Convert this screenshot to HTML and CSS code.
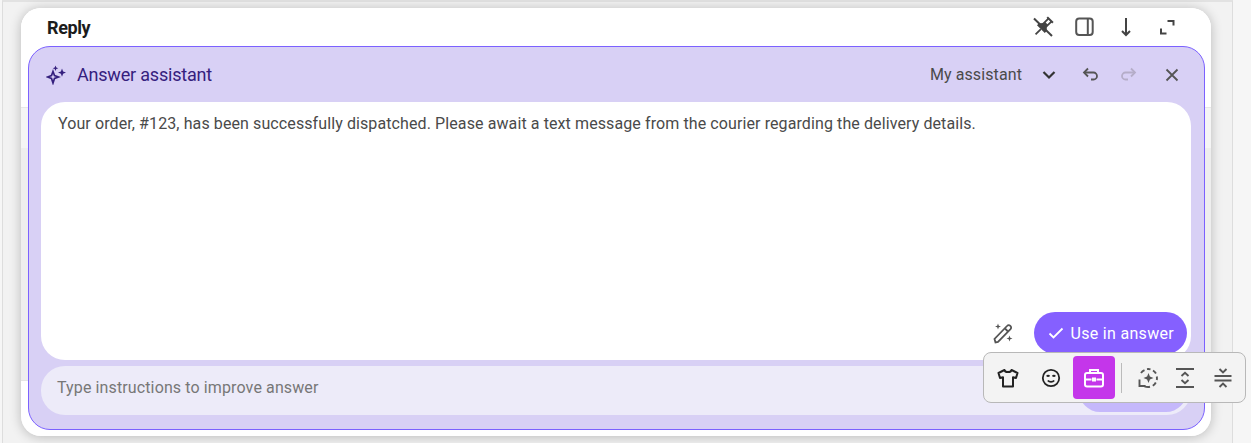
FILE: index.html
```html
<!DOCTYPE html>
<html lang="en">
<head>
<title>Answer assistant</title>
<meta charset="utf-8">
<link rel="stylesheet" href="styles.css">
</head>
<body>

<div class="page">
	<div class="card">
		<div class="card-head">
			<h2 class="card-title">Reply</h2>
			<div class="card-tools">
				<svg class="ico-24" viewBox="0 0 24 24"><g transform="rotate(45 12 12)" fill="#444"><path fill-rule="evenodd" d="M8 1h8v2h-1v6.500l2.500 3V15h-11v-2.500l2.500-3V3H8zM10.800 3v4h2.400V3z"/><path d="M11.100 15h1.800v7.500h-1.800z"/></g><path d="M3 3.500L21 21" stroke="#444" stroke-width="2"/></svg>
				<svg class="ico-24" viewBox="0 0 24 24" fill="none" stroke="#555" stroke-width="2"><rect x="4.200" y="3.500" width="16.500" height="16.500" rx="3"/><path d="M15.800 3.500v16.500"/></svg>
				<svg class="ico-24" viewBox="0 0 24 24" fill="none" stroke="#444" stroke-width="2"><path d="M12 3v16"/><path d="M8 16l4 4 4-4"/></svg>
				<svg class="ico-24" viewBox="0 0 24 24" fill="none" stroke="#444" stroke-width="2"><path d="M12.500 6h6v4.500"/><path d="M6 13.500v5h5.500"/></svg>
			</div>
		</div>

		<div class="assistant">
			<div class="assistant-head">
				<svg class="ico-20" viewBox="0 0 20 20" fill="#35207e"><path d="M7 6.500l1.500 4 4 1.500-4 1.500L7 18l-1.500-4.500-4-1.500 4-1.500z" fill="none" stroke="#35207e" stroke-width="1.700"/><path d="M16 3.500l1.100 3 2.900 1.100-2.900 1.100-1.100 3-1.100-3L12 7.600l2.900-1.100zM9.500.5l.8 2 2 .8-2 .8-.8 2-.8-2-2-.8 2-.8z"/></svg>
				<span class="assistant-title">Answer assistant</span>
				<span class="assistant-name">My assistant</span>
				<svg class="ico-chev" viewBox="0 0 14 14" fill="none" stroke="#333" stroke-width="2.200"><path d="M1.500 4l5.500 5.500L12.500 4"/></svg>
				<svg class="ico-18 undo" viewBox="0 0 18 18" fill="none" stroke="#555" stroke-width="1.800"><path d="M6 2.500L2 6.500l4 4"/><path d="M2.500 6.500h9a3.500 3.500 0 0 1 0 7H9"/></svg>
				<svg class="ico-18 redo" viewBox="0 0 18 18" fill="none" stroke="#b5adc8" stroke-width="1.800"><path d="M12 2.500l4 4-4 4"/><path d="M15.500 6.500h-9a3.500 3.500 0 0 0 0 7H9"/></svg>
				<svg class="ico-18 close" viewBox="0 0 18 18" fill="none" stroke="#555" stroke-width="1.800"><path d="M3.500 3.500l11 11M14.500 3.500l-11 11"/></svg>
			</div>

			<div class="answer">
				<p class="answer-text">Your order, #123, has been successfully dispatched. Please await a text message from the courier regarding the delivery details.</p>
				<div class="answer-actions">
					<svg class="ico-22" viewBox="0 0 22 22" fill="none" stroke="#555" stroke-width="1.800"><path d="M3.500 20.500L2.500 17 15 4a2.300 2.300 0 0 1 3.500 3.200L6 20z"/><path d="M13 6.500l3 3"/><path d="M6 1.500l.8 2.200 2.200.8-2.200.8L6 7.500l-.8-2.200L3 4.500l2.200-.8zM17.500 13.500l.8 2.200 2.200.8-2.200.8-.8 2.200-.8-2.200-2.200-.8 2.200-.8z" fill="#555" stroke="none"/></svg>
					<button class="use-btn"><svg class="ico-check" viewBox="0 0 16 16" fill="none" stroke="#fff" stroke-width="1.800"><path d="M1.500 8.500l4 4 9-9"/></svg>Use in answer</button>
				</div>
			</div>

			<div class="improve">
				<span class="improve-hint">Type instructions to improve answer</span>
				<span class="improve-btn"></span>
			</div>
		</div>

		<!-- tone popup sits over the bottom right of the panel -->
		<div class="tone-bar">
			<span class="tone"><svg class="ico-22" viewBox="0 0 22 22" fill="none" stroke="#222" stroke-width="2" stroke-linejoin="round"><path d="M7.500 3L1.500 6l1.500 5 3-.7V19.500h10v-9.200l3 .7 1.500-5-6-3c-.5 2.800-6.500 2.800-7 0z"/></svg></span>
			<span class="tone"><svg class="ico-22" viewBox="0 0 22 22" fill="none" stroke="#222" stroke-width="1.800"><circle cx="11" cy="11" r="8.200"/><path d="M6.800 9.500c.7-1 1.900-1 2.600 0M12.600 9.500c.7-1 1.900-1 2.600 0M7.800 13.500c1.500 1.800 4.900 1.800 6.400 0"/></svg></span>
			<span class="tone tone-on"><svg class="ico-22" viewBox="0 0 22 22" fill="none" stroke="#fff" stroke-width="2"><rect x="2" y="6" width="18" height="13.500" rx="2"/><path d="M7 6V3h8v3M2 12.500h6.500M13.500 12.500H20"/><rect x="9" y="10.500" width="4" height="4" fill="#fff" stroke="none"/></svg></span>
			<span class="tone-sep"></span>
			<span class="tone tone-sm"><svg class="ico-22" viewBox="0 0 22 22" fill="none" stroke="#555" stroke-width="1.900"><path d="M4 6a9 9 0 0 1 3.500-2.800M10 2.100a9 9 0 0 1 3.500.2M16 3.500a9 9 0 0 1 3 3M19.800 9.500a9 9 0 0 1 0 3.500M18.800 15.500a9 9 0 0 1-3 3.300M13 19.800a9 9 0 0 1-5.500-.5"/><path d="M2.500 12.500v6.500h6"/><path d="M11.500 6l1.400 3.600 3.600 1.400-3.600 1.400-1.400 3.600-1.400-3.600L6.500 11l3.600-1.400z" fill="#555" stroke="none"/></svg></span>
			<span class="tone tone-sm"><svg class="ico-22" viewBox="0 0 22 22" fill="none" stroke="#555" stroke-width="1.900"><path d="M2 2h18M2 20h18"/><path d="M7.500 9L11 5.800 14.500 9M7.500 13L11 16.200l3.500-3.200"/></svg></span>
			<span class="tone tone-sm"><svg class="ico-22" viewBox="0 0 22 22" fill="none" stroke="#555" stroke-width="1.900"><path d="M2.500 9h17M2.500 13.500h17"/><path d="M7.500 2L11 5.500 14.500 2M7.500 20L11 16.500l3.500 3.500"/></svg></span>
		</div>
	</div>
</div>

</body>
</html>
```

FILE: styles.css
```css
html, body {
	height: 100%;
	margin: 0;
	padding: 0;
}

body {
	background: #f6f6f6;
	font-family: Roboto, "Liberation Sans", sans-serif;
	overflow: hidden;
}

svg {
	display: block;
	flex: none;
}

.page {
	width: 1231px;
	height: 443px;
	margin-left: 2px;
	box-sizing: border-box;
	padding: 6px 21px 7px 18px;
	background: #f2f2f2;
	border-top: 2px solid #e2e2e2;
	border-left: 1px solid #ddd;
	border-right: 1px solid #ddd;
}

/* the strips left and right of the panel show the form lying under it */
.card {
	position: relative;
	height: 428px;
	box-sizing: border-box;
	padding: 0 6px 6px 7px;
	background: linear-gradient(#fff 99px, #e8e8e8 99px, #e8e8e8 100px, #f5f5f5 100px, #f5f5f5 140px, #eee 140px, #eee 372px, #e4e4e4 372px, #e4e4e4 373px, #fff 373px);
	border-radius: 20px;
	box-shadow: 0 1px 12px rgba(0, 0, 0, 0.24);
	display: flex;
	flex-direction: column;
}

.card-head {
	height: 38px;
	flex: none;
	display: flex;
	align-items: center;
	margin: 0 -6px 0 -7px;
	padding: 0 32px 0 26px;
	background: #fff;
	border-radius: 20px 20px 0 0;
}

.card-title {
	margin: 0;
	font-size: 18px;
	font-weight: 700;
	letter-spacing: -0.4px;
	color: #1c1c1c;
	flex: 1;
}

.card-tools {
	display: flex;
	gap: 17.5px;
}

.ico-24 {
	width: 24px;
	height: 24px;
}

.ico-22 {
	width: 22px;
	height: 22px;
}

.ico-20 {
	width: 20px;
	height: 20px;
}

.ico-18 {
	width: 18px;
	height: 18px;
}

.ico-chev {
	width: 14px;
	height: 14px;
	margin-left: 20px;
}

.ico-check {
	width: 16px;
	height: 16px;
	margin-right: 7px;
}

.assistant {
	flex: 1;
	display: flex;
	flex-direction: column;
	background: #d8d0f5;
	border: 1px solid #7b61ff;
	border-radius: 22px;
	padding: 0 13px 14px 12px;
}

.assistant-head {
	height: 55px;
	flex: none;
	display: flex;
	align-items: center;
	padding: 0 10px 0 5px;
}

.assistant-title {
	margin-left: 11px;
	font-size: 18px;
	letter-spacing: -0.2px;
	color: #35207e;
	flex: 1;
}

.assistant-name {
	font-size: 16px;
	letter-spacing: 0.1px;
	color: #4a4a4a;
}

.undo {
	margin-left: 26px;
}

.redo {
	margin-left: 19px;
}

.close {
	margin-left: 26px;
}

.answer {
	height: 258px;
	flex: none;
	box-sizing: border-box;
	background: #fff;
	border-radius: 24px;
	padding: 12px 4px 6px 17px;
	display: flex;
	flex-direction: column;
}

.answer-text {
	margin: 0;
	flex: 1;
	font-size: 16px;
	line-height: 20px;
	letter-spacing: 0.1px;
	color: #4a4a4a;
}

.answer-actions {
	display: flex;
	justify-content: flex-end;
	align-items: center;
	gap: 20px;
}

.use-btn {
	height: 42px;
	box-sizing: border-box;
	padding: 0 13px 0 14px;
	display: flex;
	align-items: center;
	background: #8560ff;
	border: 0;
	border-radius: 21px;
	font-family: inherit;
	font-size: 16px;
	letter-spacing: 0.3px;
	color: #fff;
	box-shadow: 0 0 0 2px rgba(255, 255, 255, 0.5);
}

.improve {
	height: 49px;
	flex: none;
	margin-top: 6px;
	box-sizing: border-box;
	padding-left: 16px;
	background: #edebf9;
	border-radius: 24px;
	display: flex;
	align-items: center;
	position: relative;
}

.improve-hint {
	flex: 1;
	font-size: 16px;
	letter-spacing: 0.12px;
	color: #777;
	margin-top: -7px;
}

.improve-btn {
	position: absolute;
	right: 4px;
	bottom: 3px;
	width: 108px;
	height: 42px;
	border-radius: 21px;
	background: #c5b8fb;
}

.tone-bar {
	position: absolute;
	left: 962px;
	top: 344px;
	width: 263px;
	height: 51px;
	box-sizing: border-box;
	padding: 3px;
	display: flex;
	align-items: center;
	background: #f3f3f3;
	border: 1px solid #b8b8b8;
	border-radius: 8px;
}

.tone {
	flex: none;
	width: 42px;
	height: 43px;
	margin-right: 1px;
	display: flex;
	align-items: center;
	justify-content: center;
	border-radius: 4px;
}

.tone-sm {
	width: 37.5px;
	margin-right: 0;
}

.tone-on {
	background: #c436ea;
}

.tone-sep {
	flex: none;
	width: 1px;
	height: 30px;
	background: #bbb;
	margin: 0 7px 0 5px;
}
```
